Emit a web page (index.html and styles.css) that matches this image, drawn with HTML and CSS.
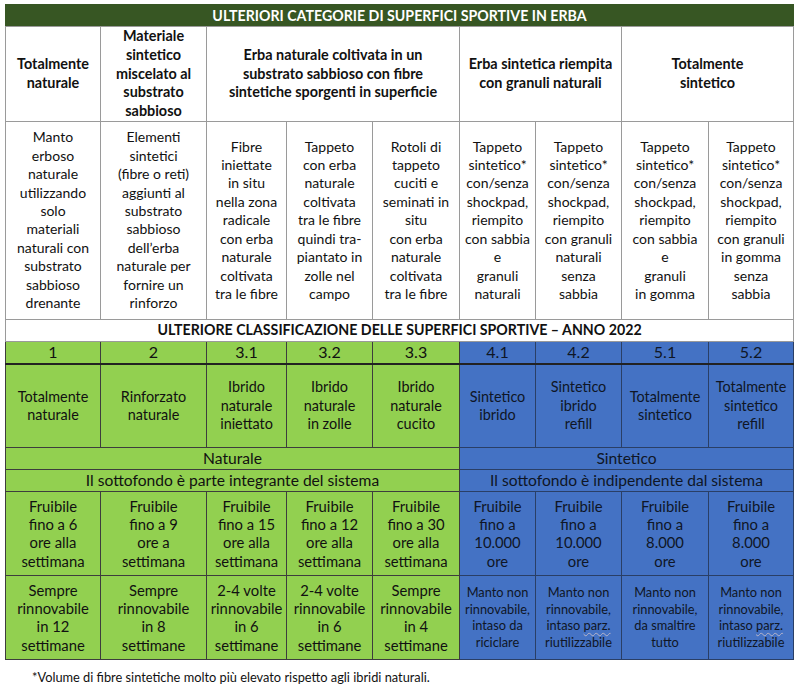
FILE: index.html
```html
<!DOCTYPE html>
<html lang="it">
<head>
<meta charset="utf-8">
<title>Ulteriori categorie di superfici sportive in erba</title>
<link rel="stylesheet" href="styles.css">
</head>
<body>
<div class="page">
  <table class="grid">
    <colgroup>
      <col class="c1"><col class="c2"><col class="c3"><col class="c4"><col class="c5">
      <col class="c6"><col class="c7"><col class="c8"><col class="c9">
    </colgroup>
    <tbody>
      <tr class="r-title">
        <td colspan="9" class="title">ULTERIORI CATEGORIE DI SUPERFICI SPORTIVE IN ERBA</td>
      </tr>
      <tr class="r-head">
        <td class="head">Totalmente<br>naturale</td>
        <td class="head">Materiale<br>sintetico<br>miscelato al<br>substrato<br>sabbioso</td>
        <td class="head" colspan="3">Erba naturale coltivata in un<br>substrato sabbioso con fibre<br>sintetiche sporgenti in superficie</td>
        <td class="head" colspan="2">Erba sintetica riempita<br>con granuli naturali</td>
        <td class="head" colspan="2">Totalmente<br>sintetico</td>
      </tr>
      <tr class="r-desc">
        <td>Manto<br>erboso<br>naturale<br>utilizzando<br>solo<br>materiali<br>naturali con<br>substrato<br>sabbioso<br>drenante</td>
        <td>Elementi<br>sintetici<br>(fibre o reti)<br>aggiunti al<br>substrato<br>sabbioso<br>dell’erba<br>naturale per<br>fornire un<br>rinforzo</td>
        <td>Fibre<br>iniettate<br>in situ<br>nella zona<br>radicale<br>con erba<br>naturale<br>coltivata<br>tra le fibre</td>
        <td>Tappeto<br>con erba<br>naturale<br>coltivata<br>tra le fibre<br>quindi tra-<br>piantato in<br>zolle nel<br>campo</td>
        <td>Rotoli di<br>tappeto<br>cuciti e<br>seminati in<br>situ<br>con erba<br>naturale<br>coltivata<br>tra le fibre</td>
        <td>Tappeto<br>sintetico*<br>con/senza<br>shockpad,<br>riempito<br>con sabbia<br>e<br>granuli<br>naturali</td>
        <td>Tappeto<br>sintetico*<br>con/senza<br>shockpad,<br>riempito<br>con granuli<br>naturali<br>senza<br>sabbia</td>
        <td>Tappeto<br>sintetico*<br>con/senza<br>shockpad,<br>riempito<br>con sabbia<br>e<br>granuli<br>in gomma</td>
        <td>Tappeto<br>sintetico*<br>con/senza<br>shockpad,<br>riempito<br>con granuli<br>in gomma<br>senza<br>sabbia</td>
      </tr>
      <tr class="r-sub">
        <td colspan="9" class="subtitle">ULTERIORE CLASSIFICAZIONE DELLE SUPERFICI SPORTIVE – ANNO 2022</td>
      </tr>
      <tr class="r-num">
        <td class="g">1</td><td class="g">2</td><td class="g">3.1</td><td class="g">3.2</td><td class="g">3.3</td>
        <td class="b">4.1</td><td class="b">4.2</td><td class="b">5.1</td><td class="b">5.2</td>
      </tr>
      <tr class="r-name">
        <td class="g">Totalmente<br>naturale</td>
        <td class="g">Rinforzato<br>naturale</td>
        <td class="g">Ibrido<br>naturale<br>iniettato</td>
        <td class="g">Ibrido<br>naturale<br>in zolle</td>
        <td class="g">Ibrido<br>naturale<br>cucito</td>
        <td class="b">Sintetico<br>ibrido</td>
        <td class="b">Sintetico<br>ibrido<br>refill</td>
        <td class="b">Totalmente<br>sintetico</td>
        <td class="b">Totalmente<br>sintetico<br>refill</td>
      </tr>
      <tr class="r-group">
        <td class="g" colspan="5">Naturale</td>
        <td class="b" colspan="4">Sintetico</td>
      </tr>
      <tr class="r-group">
        <td class="g" colspan="5">Il sottofondo è parte integrante del sistema</td>
        <td class="b" colspan="4">Il sottofondo è indipendente dal sistema</td>
      </tr>
      <tr class="r-use">
        <td class="g">Fruibile<br>fino a 6<br>ore alla<br>settimana</td>
        <td class="g">Fruibile<br>fino a 9<br>ore a<br>settimana</td>
        <td class="g">Fruibile<br>fino a 15<br>ore alla<br>settimana</td>
        <td class="g">Fruibile<br>fino a 12<br>ore alla<br>settimana</td>
        <td class="g">Fruibile<br>fino a 30<br>ore alla<br>settimana</td>
        <td class="b">Fruibile<br>fino a<br>10.000<br>ore</td>
        <td class="b">Fruibile<br>fino a<br>10.000<br>ore</td>
        <td class="b">Fruibile<br>fino a<br>8.000<br>ore</td>
        <td class="b">Fruibile<br>fino a<br>8.000<br>ore</td>
      </tr>
      <tr class="r-renew">
        <td class="g">Sempre<br>rinnovabile<br>in 12<br>settimane</td>
        <td class="g">Sempre<br>rinnovabile<br>in 8<br>settimane</td>
        <td class="g">2-4 volte<br>rinnovabile<br>in 6<br>settimane</td>
        <td class="g">2-4 volte<br>rinnovabile<br>in 6<br>settimane</td>
        <td class="g">Sempre<br>rinnovabile<br>in 4<br>settimane</td>
        <td class="b small">Manto non<br>rinnovabile,<br>intaso da<br>riciclare</td>
        <td class="b small">Manto non<br>rinnovabile,<br>intaso <span class="spell">parz.</span><br>riutilizzabile</td>
        <td class="b small">Manto non<br>rinnovabile,<br>da smaltire<br>tutto</td>
        <td class="b small">Manto non<br>rinnovabile,<br>intaso <span class="spell">parz.</span><br>riutilizzabile</td>
      </tr>
    </tbody>
  </table>
  <p class="note">*Volume di fibre sintetiche molto più elevato rispetto agli ibridi naturali.</p>
</div>
</body>
</html>
```

FILE: styles.css
```css
html, body {
  margin: 0;
  padding: 0;
  background: #ffffff;
}

body {
  font-family: Lato, "Open Sans", "Liberation Sans", sans-serif;
  color: #111111;
}

.page {
  padding: 4px 0 0 5px;
}

.grid {
  border-collapse: collapse;
  table-layout: fixed;
  width: 788px;
}

.c1 { width: 95px; }
.c2 { width: 106px; }
.c3 { width: 80px; }
.c4 { width: 86px; }
.c5 { width: 87px; }
.c6 { width: 76px; }
.c7 { width: 86px; }
.c8 { width: 87px; }
.c9 { width: 85px; }

.grid td {
  border: 1px solid #9a9a9a;
  padding: 0 1px;
  text-align: center;
  vertical-align: middle;
  font-size: 14px;
  line-height: 18.4px;
  white-space: nowrap;
  overflow: hidden;
}

.r-title td { height: 21px; }
.r-head td { height: 91px; }
.r-desc td { height: 197px; }
.r-sub td { height: 21px; }
.r-num td { height: 21px; }
.r-name td { height: 82px; }
.r-group td { height: 21px; }
.r-use td { height: 83px; }
.r-renew td { height: 83px; }

.grid td.title {
  background: #375623;
  border-color: #375623 #375623 #9a9a9a #375623;
  color: #ffffff;
  font-weight: 700;
  font-size: 14.2px;
  line-height: 20px;
}

.grid td.head {
  font-weight: 700;
  font-size: 14.4px;
  line-height: 18.8px;
}

.grid td.subtitle {
  font-weight: 700;
  font-size: 14.2px;
  line-height: 20px;
}

.grid td.g {
  background: #92d050;
  border-color: #3d3d3d;
}

.grid td.b {
  background: #4472c4;
  border-color: #2a3f66;
  color: #0f1626;
}

.grid .r-num td {
  font-size: 16px;
  line-height: 20px;
  border-bottom: 2px solid #222222;
}

.grid .r-name td {
  font-size: 14.4px;
}

.grid .r-group td {
  font-size: 15.6px;
  line-height: 20px;
}

.grid .r-use td,
.grid .r-renew td {
  font-size: 14.8px;
}

.grid .r-renew td.small {
  font-size: 12.8px;
  line-height: 16.6px;
}

.spell {
  text-decoration: underline wavy #b8b4c8;
  text-decoration-thickness: 1px;
  text-underline-offset: 2px;
}

.note {
  margin: 8px 0 0 27px;
  font-size: 12.8px;
  line-height: 18px;
  color: #111111;
}
```
